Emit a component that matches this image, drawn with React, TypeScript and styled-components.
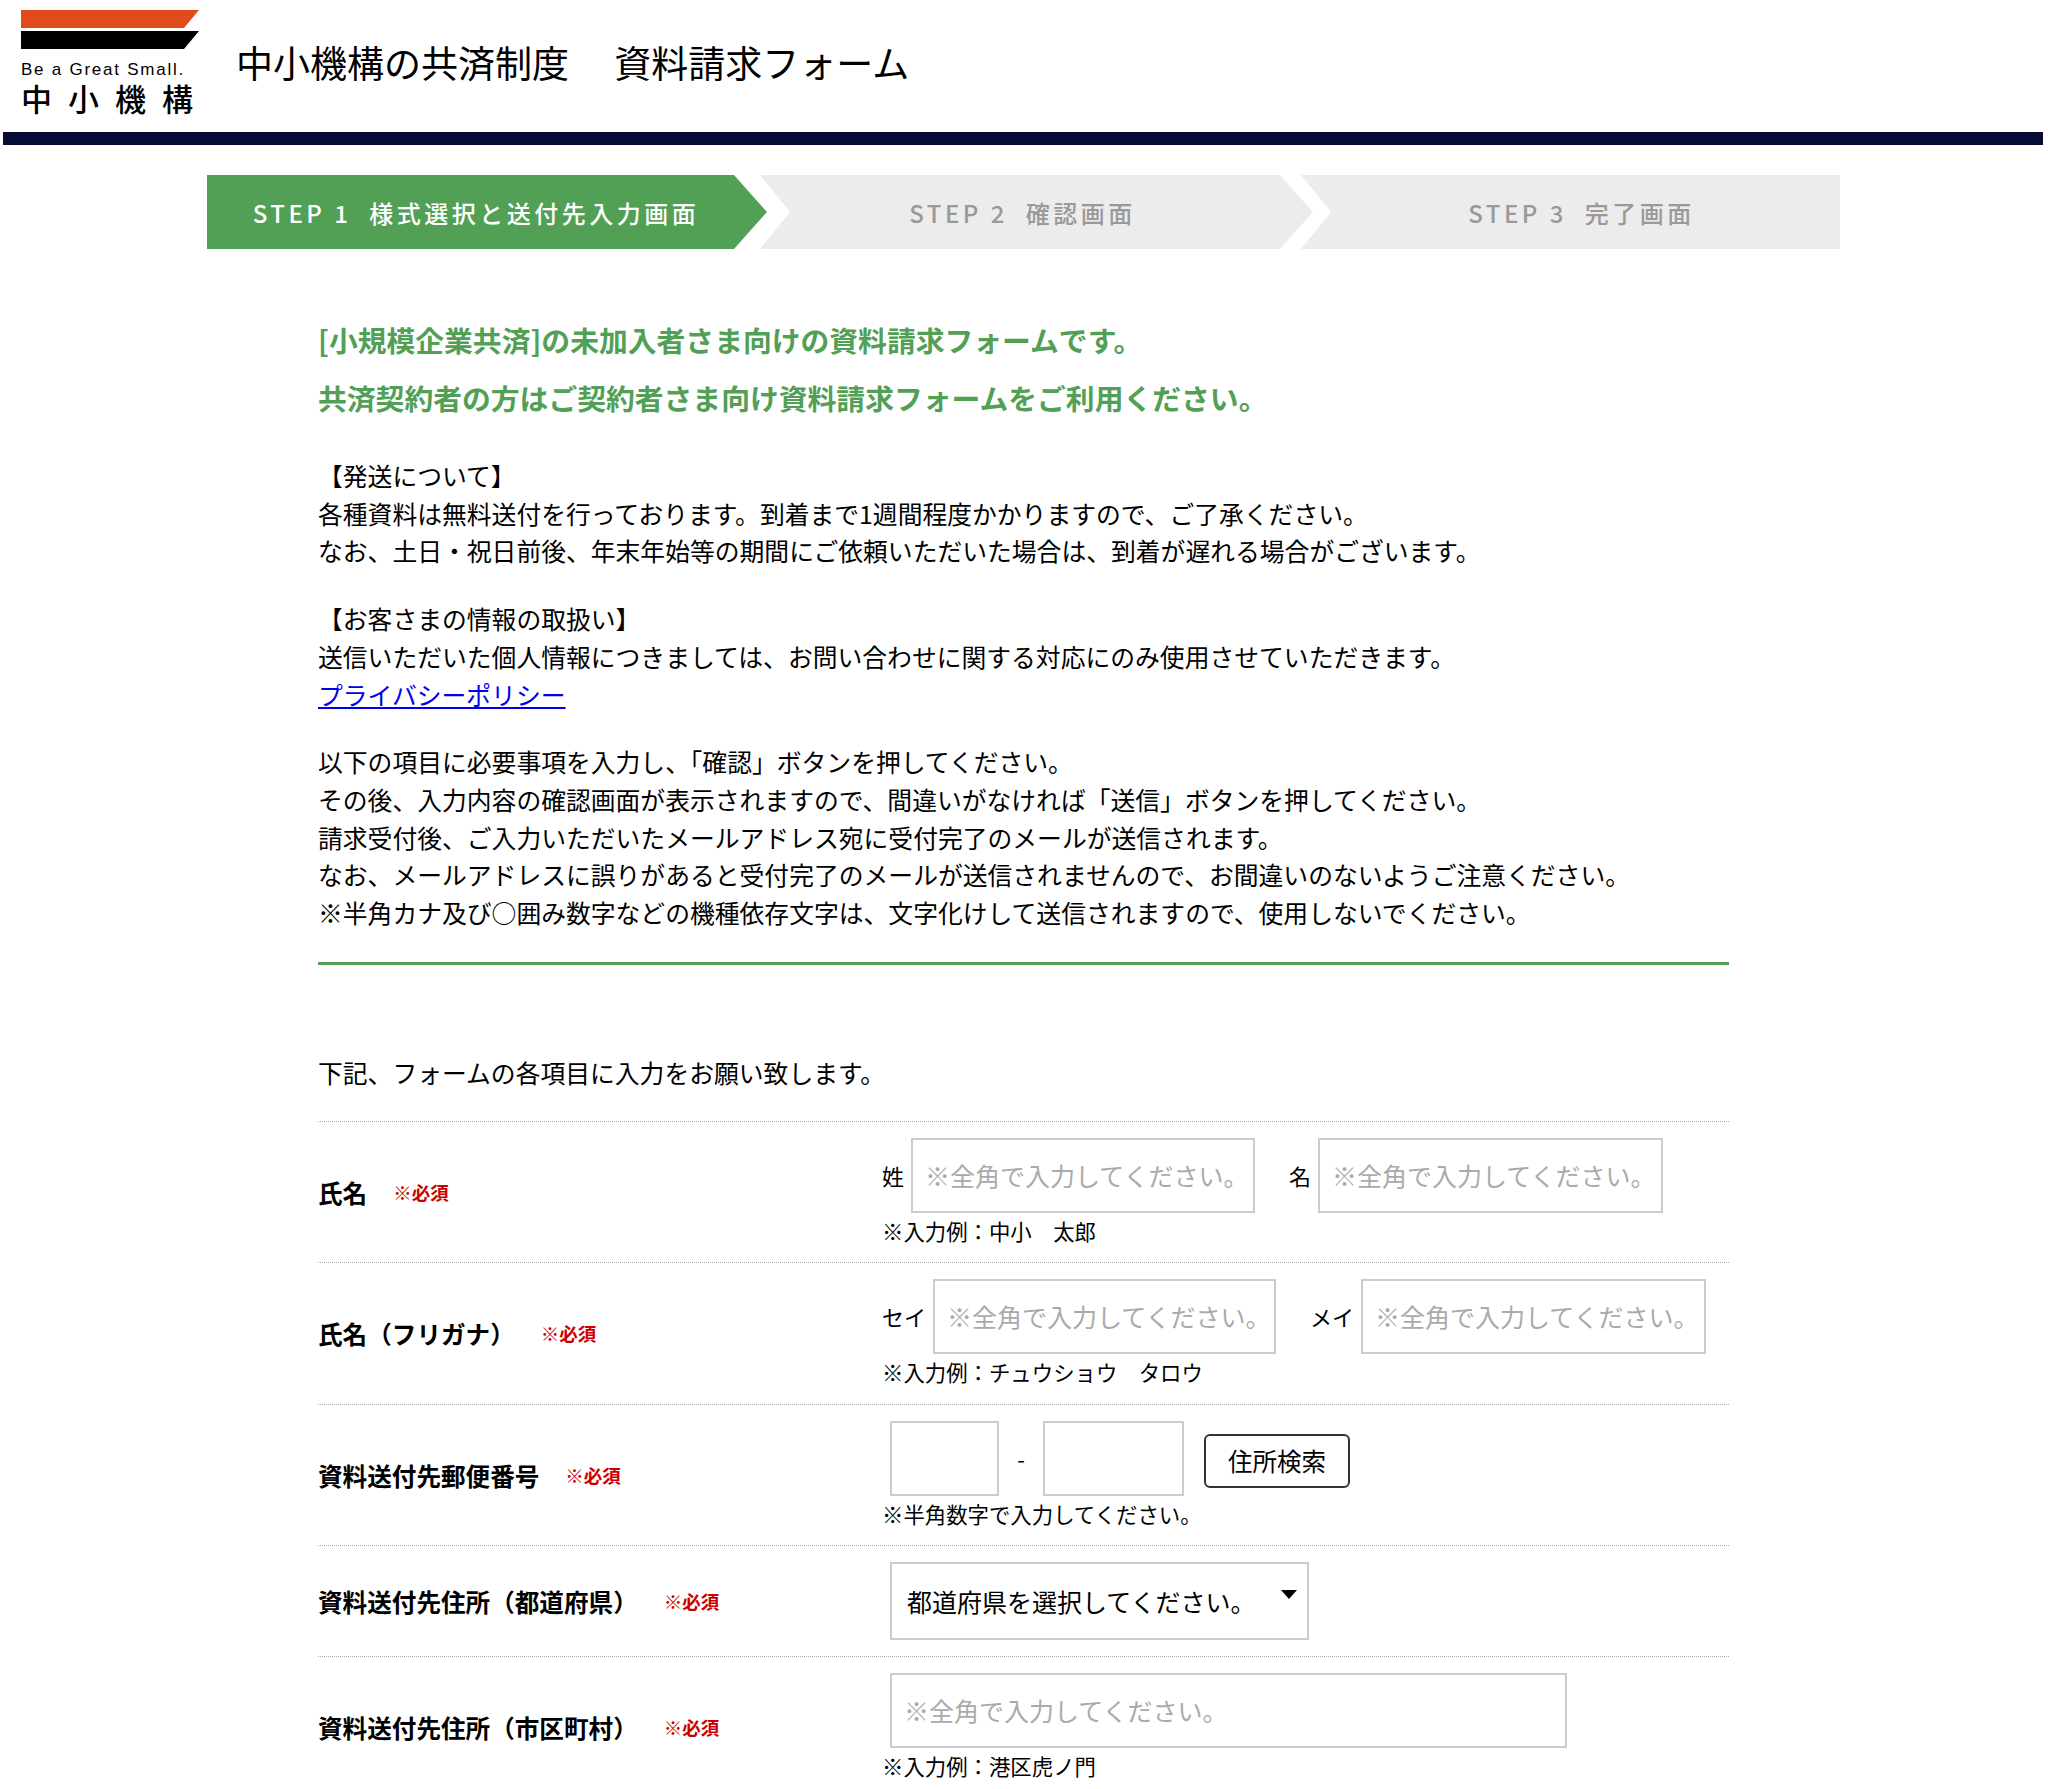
import React from "react"
import styled, { createGlobalStyle } from "styled-components"

const green = "#529f56"

const GlobalStyle = createGlobalStyle`
    html, body {
        margin: 0;
        padding: 0;
        background: #fff;
    }
    body {
        font-family: "Noto Sans CJK JP", "Noto Sans", sans-serif;
        color: #000;
    }
    * {
        box-sizing: border-box;
    }
`

const Page = styled.div`
    width: 2048px;
    height: 1789px;
    overflow: hidden;
`

const Header = styled.header`
    display: flex;
    align-items: flex-start;
    height: 132px;
    padding: 10px 0 0 21px;
`

const LogoBox = styled.div`
    display: flex;
    flex-direction: column;
    width: 178px;
`

const LogoMark = styled.svg`
    display: block;
    width: 178px;
    height: 39px;
`

const LogoTagline = styled.div`
    font-family: "Liberation Sans", sans-serif;
    font-size: 17px;
    line-height: 20px;
    letter-spacing: 1.75px;
    margin-top: 11px;
    white-space: nowrap;
`

const LogoName = styled.div`
    font-size: 31px;
    line-height: 36px;
    letter-spacing: 16px;
    margin-top: 0;
    white-space: nowrap;
    font-weight: 500;
`

const SiteTitle = styled.h1`
    margin: 32px 0 0 37px;
    font-size: 37px;
    line-height: 40px;
    font-weight: 400;
    white-space: pre;
`

const NavyBar = styled.div`
    height: 13px;
    margin: 0 5px 0 3px;
    background: #070b38;
`

const Steps = styled.ol`
    display: flex;
    list-style: none;
    margin: 30px 0 0 207px;
    padding: 0;
    height: 74px;
`

const Step = styled.li<{ $width: number; $overlap: number; $notch: boolean; $tip: boolean; $active: boolean; $shift: number }>`
    display: flex;
    align-items: center;
    justify-content: center;
    width: ${(p) => p.$width}px;
    margin-left: ${(p) => -p.$overlap}px;
    padding-left: ${(p) => Math.max(p.$shift, 0)}px;
    padding-right: ${(p) => Math.max(-p.$shift, 0)}px;
    background: ${(p) => (p.$active ? green : "#ececec")};
    color: ${(p) => (p.$active ? "#fff" : "#999")};
    font-size: 24px;
    font-weight: 500;
    letter-spacing: 3.5px;
    white-space: pre;
    clip-path: polygon(
        0 0,
        ${(p) => (p.$tip ? `calc(100% - 33px) 0, 100% 50%, calc(100% - 33px) 100%` : `100% 0, 100% 100%`)},
        0 100%
        ${(p) => (p.$notch ? `, 30px 50%` : "")}
    );
`

const Main = styled.main`
    width: 1411px;
    margin-left: 318px;
`

const Lead = styled.p`
    margin: 62px 0 30px;
    color: ${green};
    font-size: 28.8px;
    line-height: 58px;
    font-weight: 700;
    white-space: nowrap;
`

const Paragraph = styled.p`
    margin: 0 0 30px;
    font-size: 24.8px;
    line-height: 37.7px;
    white-space: nowrap;
`

const PolicyLink = styled.a`
    color: #0000ee;
    text-decoration: underline;
`

const Divider = styled.hr`
    height: 3px;
    margin: 0;
    border: 0;
    background: ${green};
`

const FormIntro = styled.p`
    margin: 88px 0 30px;
    font-size: 24.8px;
    line-height: 38px;
`

const Row = styled.div<{ $height: number }>`
    display: grid;
    grid-template-columns: 564px 1fr;
    align-items: center;
    height: ${(p) => p.$height}px;
    border-top: 1px dotted #aaa;
`

const RowLabel = styled.div`
    display: flex;
    align-items: center;
    font-size: 24.6px;
    font-weight: 700;
    white-space: nowrap;
`

const Required = styled.span`
    margin-left: 26px;
    color: #cc0000;
    font-size: 18.5px;
    font-weight: 700;
`

const Field = styled.div`
    display: flex;
    flex-direction: column;
    align-self: start;
    padding-top: 16px;
`

const Line = styled.div<{ $indent?: number; $gap?: number }>`
    display: flex;
    align-items: center;
    gap: ${(p) => p.$gap ?? 0}px;
    padding-left: ${(p) => p.$indent ?? 0}px;
`

const NamePart = styled.label`
    display: flex;
    align-items: center;
    gap: 7px;
    font-size: 22px;
`

const TextInput = styled.input<{ $width: number }>`
    width: ${(p) => p.$width}px;
    height: 75px;
    padding: 0 12px;
    border: 2px solid #ccc;
    border-radius: 0;
    outline: 0;
    background: #fff;
    font-family: inherit;
    font-size: 25px;

    &::placeholder {
        color: #aaa;
        opacity: 1;
    }
`

const Dash = styled.span`
    width: 44px;
    text-align: center;
    font-size: 22px;
`

const SearchButton = styled.button`
    width: 146px;
    height: 54px;
    margin: 5px 0 0 20px;
    border: 2px solid #333;
    border-radius: 6px;
    background: #fff;
    color: #000;
    font-family: inherit;
    font-size: 24.5px;
    padding: 0;
`

const Note = styled.div`
    font-size: 21.4px;
    line-height: 36px;
    white-space: pre;
`

const SelectWrap = styled.div`
    position: relative;
    width: 419px;
    margin-left: 8px;
`

const Select = styled.select`
    display: block;
    width: 100%;
    height: 78px;
    padding: 0 0 0 15px;
    border: 2px solid #ccc;
    border-radius: 0;
    outline: 0;
    background: #fff;
    color: #000;
    font-family: inherit;
    font-size: 25px;
    appearance: none;
`

const SelectArrow = styled.span`
    position: absolute;
    top: 28px;
    right: 12px;
    width: 0;
    height: 0;
    border-left: 8px solid transparent;
    border-right: 8px solid transparent;
    border-top: 9px solid #000;
    pointer-events: none;
`

const placeholder = "※全角で入力してください。"

const App: React.FC = () => {
    return (
        <Page>
            <GlobalStyle />
            <Header>
                <LogoBox>
                    <LogoMark viewBox="0 0 178 39">
                        <polygon points="0,0 178,0 163,18 0,18" fill="#e24a1c" />
                        <polygon points="0,21 178,21 163,39 0,39" fill="#000" />
                    </LogoMark>
                    <LogoTagline>Be a Great Small.</LogoTagline>
                    <LogoName>中小機構</LogoName>
                </LogoBox>
                <SiteTitle>中小機構の共済制度{"\u3000 "}資料請求フォーム</SiteTitle>
            </Header>
            <NavyBar />

            <Steps>
                <Step $width={560} $overlap={0} $notch={false} $tip $active $shift={-22}>
                    STEP 1 {" "}様式選択と送付先入力画面
                </Step>
                <Step $width={553} $overlap={7} $notch $tip $active={false} $shift={-28}>
                    STEP 2 {" "}確認画面
                </Step>
                <Step $width={539} $overlap={12} $notch={true} $tip={false} $active={false} $shift={22}>
                    STEP 3 {" "}完了画面
                </Step>
            </Steps>

            <Main>
                <Lead>
                    [小規模企業共済]の未加入者さま向けの資料請求フォームです。
                    <br />
                    共済契約者の方はご契約者さま向け資料請求フォームをご利用ください。
                </Lead>

                <Paragraph>
                    【発送について】
                    <br />
                    各種資料は無料送付を行っております。到着まで1週間程度かかりますので、ご了承ください。
                    <br />
                    なお、土日・祝日前後、年末年始等の期間にご依頼いただいた場合は、到着が遅れる場合がございます。
                </Paragraph>

                <Paragraph>
                    【お客さまの情報の取扱い】
                    <br />
                    送信いただいた個人情報につきましては、お問い合わせに関する対応にのみ使用させていただきます。
                    <br />
                    <PolicyLink href="#">プライバシーポリシー</PolicyLink>
                </Paragraph>

                <Paragraph>
                    以下の項目に必要事項を入力し、「確認」ボタンを押してください。
                    <br />
                    その後、入力内容の確認画面が表示されますので、間違いがなければ「送信」ボタンを押してください。
                    <br />
                    請求受付後、ご入力いただいたメールアドレス宛に受付完了のメールが送信されます。
                    <br />
                    なお、メールアドレスに誤りがあると受付完了のメールが送信されませんので、お間違いのないようご注意ください。
                    <br />
                    ※半角カナ及び○囲み数字などの機種依存文字は、文字化けして送信されますので、使用しないでください。
                </Paragraph>

                <Divider />

                <FormIntro>下記、フォームの各項目に入力をお願い致します。</FormIntro>

                <Row $height={141}>
                    <RowLabel>
                        氏名<Required>※必須</Required>
                    </RowLabel>
                    <Field>
                        <Line $gap={34}>
                            <NamePart>
                                姓<TextInput $width={344} placeholder={placeholder} />
                            </NamePart>
                            <NamePart>
                                名<TextInput $width={345} placeholder={placeholder} />
                            </NamePart>
                        </Line>
                        <Note>※入力例：中小　太郎</Note>
                    </Field>
                </Row>

                <Row $height={142}>
                    <RowLabel>
                        氏名（フリガナ）<Required>※必須</Required>
                    </RowLabel>
                    <Field>
                        <Line $gap={34}>
                            <NamePart>
                                セイ<TextInput $width={343} placeholder={placeholder} />
                            </NamePart>
                            <NamePart>
                                メイ<TextInput $width={345} placeholder={placeholder} />
                            </NamePart>
                        </Line>
                        <Note>※入力例：チュウショウ　タロウ</Note>
                    </Field>
                </Row>

                <Row $height={141}>
                    <RowLabel>
                        資料送付先郵便番号<Required>※必須</Required>
                    </RowLabel>
                    <Field>
                        <Line $indent={8}>
                            <TextInput $width={109} />
                            <Dash>-</Dash>
                            <TextInput $width={141} />
                            <SearchButton type="button">住所検索</SearchButton>
                        </Line>
                        <Note>※半角数字で入力してください。</Note>
                    </Field>
                </Row>

                <Row $height={111}>
                    <RowLabel>
                        資料送付先住所（都道府県）<Required>※必須</Required>
                    </RowLabel>
                    <Field>
                        <SelectWrap>
                            <Select defaultValue="">
                                <option value="">都道府県を選択してください。</option>
                            </Select>
                            <SelectArrow />
                        </SelectWrap>
                    </Field>
                </Row>

                <Row $height={141}>
                    <RowLabel>
                        資料送付先住所（市区町村）<Required>※必須</Required>
                    </RowLabel>
                    <Field>
                        <Line $indent={8}>
                            <TextInput $width={677} placeholder={placeholder} />
                        </Line>
                        <Note>※入力例：港区虎ノ門</Note>
                    </Field>
                </Row>
            </Main>
        </Page>
    )
}

export default App
